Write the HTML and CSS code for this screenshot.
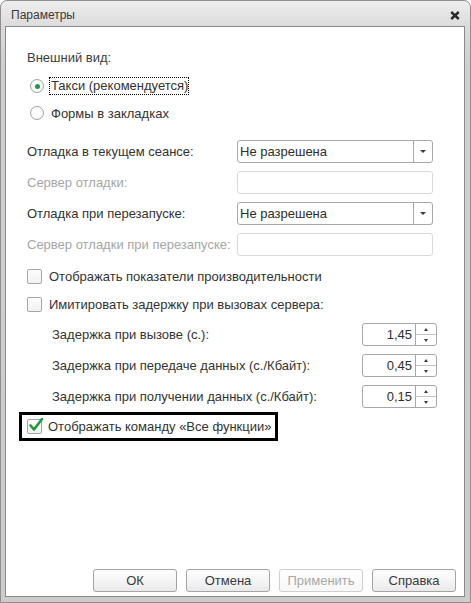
FILE: index.html
```html
<!DOCTYPE html>
<html lang="ru">
<head>
<meta charset="utf-8">
<title>Параметры</title>
<link rel="stylesheet" href="styles.css">
</head>
<body>
<div class="window">
  <div class="titlebar">
    <span class="title">Параметры</span>
    <svg class="close" width="10" height="9" viewBox="0 0 10 9"><path d="M1.2 1 L8.8 8 M8.8 1 L1.2 8" stroke="#2b2b2b" stroke-width="2.4" stroke-linecap="butt"/></svg>
  </div>
  <div class="client">
    <div class="heading">Внешний вид:</div>
    <div class="radio-row first">
      <span class="radio on"><span class="dot"></span></span>
      <span class="focus">Такси (рекомендуется)</span>
    </div>
    <div class="radio-row second">
      <span class="radio"></span>
      <span class="rtext">Формы в закладках</span>
    </div>

    <div class="field-row r1">
      <span class="lbl">Отладка в текущем сеансе:</span>
      <div class="combo"><span class="val">Не разрешена</span><span class="cbtn"><span class="tri-down"></span></span></div>
    </div>
    <div class="field-row">
      <span class="lbl dis">Сервер отладки:</span>
      <div class="input dis"></div>
    </div>
    <div class="field-row">
      <span class="lbl">Отладка при перезапуске:</span>
      <div class="combo"><span class="val">Не разрешена</span><span class="cbtn"><span class="tri-down"></span></span></div>
    </div>
    <div class="field-row">
      <span class="lbl dis">Сервер отладки при перезапуске:</span>
      <div class="input dis"></div>
    </div>

    <div class="check-row c1">
      <span class="box"></span>
      <span class="ctext">Отображать показатели производительности</span>
    </div>
    <div class="check-row c2">
      <span class="box"></span>
      <span class="ctext">Имитировать задержку при вызовах сервера:</span>
    </div>

    <div class="spin-row s1">
      <span class="slbl">Задержка при вызове (с.):</span>
      <div class="spin"><span class="sval">1,45</span><span class="sbtns"><span class="up"><span class="tri-up"></span></span><span class="down"><span class="tri-down sm"></span></span></span></div>
    </div>
    <div class="spin-row">
      <span class="slbl">Задержка при передаче данных (с./Кбайт):</span>
      <div class="spin"><span class="sval">0,45</span><span class="sbtns"><span class="up"><span class="tri-up"></span></span><span class="down"><span class="tri-down sm"></span></span></span></div>
    </div>
    <div class="spin-row">
      <span class="slbl">Задержка при получении данных (с./Кбайт):</span>
      <div class="spin"><span class="sval">0,15</span><span class="sbtns"><span class="up"><span class="tri-up"></span></span><span class="down"><span class="tri-down sm"></span></span></span></div>
    </div>

    <div class="mark">
      <span class="box checked"><svg class="tick" width="18" height="16" viewBox="0 0 18 16"><path d="M3.5 8.5 L7 12.5 L15 2" fill="none" stroke="#1e9a3c" stroke-width="2.6" stroke-linecap="round" stroke-linejoin="round"/></svg></span>
      <span class="ctext">Отображать команду «Все функции»</span>
    </div>

    <div class="buttons">
      <span class="button">ОК</span>
      <span class="button">Отмена</span>
      <span class="button disabled">Применить</span>
      <span class="button">Справка</span>
    </div>
  </div>
</div>
</body>
</html>
```
FILE: styles.css
```css
html, body {
  margin: 0;
  padding: 0;
  background: #ffffff;
}
body {
  font-family: "Liberation Sans", Arial, sans-serif;
  font-size: 13px;
  font-weight: normal;
  color: #4a4a4a;
}
.window {
  box-sizing: border-box;
  width: 471px;
  height: 603px;
  border: 1px solid #8f8f8f;
  border-radius: 7px 7px 0 0;
  background: linear-gradient(#eeeeee 0px, #dcdcdc 25px, #cfcfcf 60px, #cccccc 100%);
  padding: 0 5px 5px 4px;
  display: flex;
  flex-direction: column;
}
.titlebar {
  height: 25px;
  flex: none;
  display: flex;
  align-items: center;
  justify-content: space-between;
  padding: 0 5px 0 6px;
}
.title {
  font-family: "Liberation Sans", Arial, sans-serif;
  font-size: 12px;
  color: #3a3a3a;
  padding-top: 3px;
}
.close {
  margin-top: 3px;
}
.client {
  flex: 1;
  background: #ffffff;
  border: 1px solid #8a8a8a;
  display: flex;
  flex-direction: column;
  padding: 0 0 4px 21px;
}
.heading {
  margin-top: 20px;
  height: 22px;
  line-height: 22px;
  color: #3c3c3c;
}
.radio-row {
  height: 22px;
  display: flex;
  align-items: center;
  padding-left: 3px;
  color: #333333;
}
.radio-row.first { margin-top: 6px; }
.radio-row.second { margin-top: 5px; }
.radio {
  box-sizing: border-box;
  width: 14px;
  height: 14px;
  border: 1px solid #a3a3a3;
  border-radius: 50%;
  background: radial-gradient(circle at 50% 40%, #ffffff 40%, #f0f0f0 100%);
  display: flex;
  align-items: center;
  justify-content: center;
  margin-right: 5px;
  flex: none;
}
.dot {
  width: 5px;
  height: 5px;
  border-radius: 50%;
  background: #1f9a45;
}
.focus {
  border: 1px dotted #000000;
  height: 18px;
  line-height: 16px;
  padding: 0 0 0 1px;
  box-sizing: border-box;
}
.rtext { padding-left: 2px; }

.field-row {
  display: flex;
  align-items: center;
  height: 23px;
  margin-top: 8px;
}
.field-row.r1 { margin-top: 16px; }
.lbl {
  width: 210px;
  flex: none;
  color: #333333;
}
.lbl.dis { color: #a6a6a6; }
.combo, .input {
  box-sizing: border-box;
  width: 196px;
  height: 23px;
  border: 1px solid #a8a8a8;
  border-radius: 3px;
  display: flex;
  align-items: center;
}
.input.dis { border-color: #dadada; }
.val {
  flex: 1;
  padding-left: 2px;
  color: #2e2e2e;
}
.cbtn {
  width: 18px;
  height: 100%;
  border-left: 1px solid #a8a8a8;
  display: flex;
  align-items: center;
  justify-content: center;
}
.tri-down {
  width: 0;
  height: 0;
  border-left: 3px solid transparent;
  border-right: 3px solid transparent;
  border-top: 3px solid #3a3a3a;
}
.tri-down.sm {
  border-left-width: 2px;
  border-right-width: 2px;
}
.tri-up {
  width: 0;
  height: 0;
  border-left: 2px solid transparent;
  border-right: 2px solid transparent;
  border-bottom: 3px solid #3a3a3a;
}

.check-row {
  display: flex;
  align-items: center;
  height: 22px;
  color: #333333;
}
.check-row.c1 { margin-top: 9px; }
.check-row.c2 { margin-top: 6px; }
.box {
  box-sizing: border-box;
  width: 15px;
  height: 15px;
  border: 1px solid #a6a6a6;
  border-radius: 2px;
  background: linear-gradient(#fdfdfd, #f1f1f1);
  margin-right: 7px;
  flex: none;
  position: relative;
}
.tick {
  position: absolute;
  left: -1px;
  top: -3px;
}
.spin-row {
  display: flex;
  align-items: center;
  height: 23px;
  margin-top: 8px;
  padding-left: 25px;
  color: #333333;
}
.slbl {
  width: 310px;
  flex: none;
}
.spin {
  box-sizing: border-box;
  width: 75px;
  height: 23px;
  border: 1px solid #a8a8a8;
  border-radius: 3px;
  display: flex;
}
.sval {
  flex: 1;
  text-align: right;
  line-height: 21px;
  padding-right: 3px;
  color: #2e2e2e;
}
.sbtns {
  width: 20px;
  border-left: 1px solid #a8a8a8;
  display: flex;
  flex-direction: column;
}
.up, .down {
  flex: 1;
  display: flex;
  align-items: center;
  justify-content: center;
}
.up { border-bottom: 1px solid #c4c4c4; }

.mark {
  box-sizing: border-box;
  margin-top: 4px;
  margin-left: -8px;
  width: 259px;
  height: 29px;
  border: 3px solid #000000;
  display: flex;
  align-items: center;
  padding-left: 5px;
  color: #333333;
}
.mark .box { margin-right: 6px; }

.buttons {
  margin-top: auto;
  display: flex;
  justify-content: flex-end;
  gap: 9px;
  padding-right: 8px;
}
.button {
  box-sizing: border-box;
  width: 84px;
  height: 23px;
  border: 1px solid #a4a4a4;
  border-radius: 3px;
  background: linear-gradient(#ffffff, #f3f3f3 60%, #e9e9e9);
  display: flex;
  align-items: center;
  justify-content: center;
  color: #3a3a3a;
  font-weight: normal;
}
.button.disabled {
  color: #a8a8a8;
  border-color: #cfcfcf;
  background: linear-gradient(#ffffff, #f7f7f7);
}
```
